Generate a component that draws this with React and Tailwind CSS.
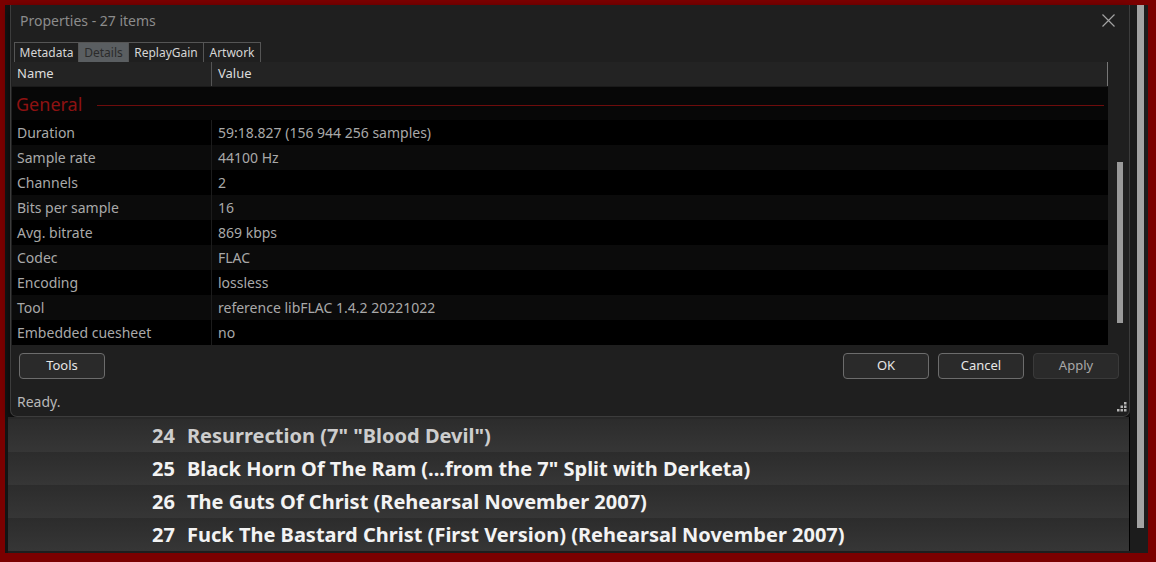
import React from "react";

const ui = { fontFamily: '"Noto Sans", "Open Sans", sans-serif' };

const details = [
  ["Duration", "59:18.827 (156 944 256 samples)"],
  ["Sample rate", "44100 Hz"],
  ["Channels", "2"],
  ["Bits per sample", "16"],
  ["Avg. bitrate", "869 kbps"],
  ["Codec", "FLAC"],
  ["Encoding", "lossless"],
  ["Tool", "reference libFLAC 1.4.2 20221022"],
  ["Embedded cuesheet", "no"],
];

const tracks = [
  ["24", 'Resurrection (7" "Blood Devil")', true],
  ["25", 'Black Horn Of The Ram (...from the 7" Split with Derketa)', false],
  ["26", "The Guts Of Christ (Rehearsal November 2007)", false],
  ["27", "Fuck The Bastard Christ (First Version) (Rehearsal November 2007)", false],
];

function Tab({ label, width, active }) {
  return (
    <div
      className={
        "h-full flex items-center justify-center border-l border-t border-r border-[#555] -ml-px first:ml-0 text-[12px] " +
        (active ? "bg-[#5a5e61] text-[#2b2b2b]" : "text-[#d6d6d6]")
      }
      style={{ width }}
    >
      {label}
    </div>
  );
}

function Button({ children, disabled }) {
  return (
    <div
      className={
        "w-[86px] h-[26px] rounded-[4px] flex items-center justify-center text-[13px] bg-[#2a2a2a] border " +
        (disabled ? "border-[#3a3a3a] text-[#a8a8a8]" : "border-[#6c6c6c] text-[#e6e6e6]")
      }
    >
      {children}
    </div>
  );
}

function ResizeGrip() {
  return (
    <svg width="11" height="11" viewBox="0 0 11 11" className="block">
      <rect x="8" y="0" width="2.5" height="2.5" fill="#b4b4b4" />
      <rect x="4.5" y="3.5" width="2.5" height="2.5" fill="#b4b4b4" />
      <rect x="8" y="3.5" width="2.5" height="2.5" fill="#b4b4b4" />
      <rect x="1" y="7" width="2.5" height="2.5" fill="#b4b4b4" />
      <rect x="4.5" y="7" width="2.5" height="2.5" fill="#b4b4b4" />
      <rect x="8" y="7" width="2.5" height="2.5" fill="#b4b4b4" />
    </svg>
  );
}

function PropertiesDialog() {
  return (
    <div
      className="ml-[2px] h-[412px] w-[1120px] bg-[#1f1f1f] border-l border-r border-b border-[#3c3c3c] rounded-b-[7px] flex flex-col shadow-[0_4px_10px_rgba(0,0,0,0.6)]"
      style={ui}
    >
      {/* title bar */}
      <div className="h-[36px] flex items-center justify-between pl-[9px] pr-[14px] pb-[6px]">
        <span className="text-[14px] text-[#8c8c8c]">Properties - 27 items</span>
        <svg width="13" height="13" viewBox="0 0 13 13" className="block">
          <path d="M0.5 0.5 L12.5 12.5 M12.5 0.5 L0.5 12.5" stroke="#a2a2a2" strokeWidth="1.2" />
        </svg>
      </div>

      {/* tabs */}
      <div className="mt-px h-[20px] pl-[3px] flex">
        <Tab label="Metadata" width={65} />
        <Tab label="Details" width={51} active />
        <Tab label="ReplayGain" width={76} />
        <Tab label="Artwork" width={58} />
      </div>

      {/* list view */}
      <div className="ml-px mr-px h-[283px] flex bg-[#222]">
        <div className="w-[1096px] flex flex-col">
          <div className="h-[25px] flex items-center text-[13px] text-[#dcdcdc] bg-[#232323] border-b border-[#1a1a1a]">
            <div className="w-[200px] h-full flex items-center pl-[5px] border-r border-[#555]">Name</div>
            <div className="flex-1 h-full flex items-center pl-[6px] border-r border-[#777]">Value</div>
          </div>
          <div className="flex-1 bg-black flex flex-col">
            <div className="h-[33px] flex items-center pl-[4px] pr-[4px] bg-[#070707] pt-[3px]">
              <span className="text-[18px] text-[#8e1212] pb-[2px]">General</span>
              <div className="flex-1 ml-[15px] h-px bg-[#6e0c0c]" />
            </div>
            {details.map(([k, v], i) => (
              <div
                key={k}
                className={"h-[25px] flex items-center text-[14px] text-[#a9a9a9] " + (i % 2 ? "bg-[#0b0b0b]" : "bg-black")}
              >
                <div className="w-[200px] h-full flex items-center pl-[5px] border-r border-[#1c1c1c]">{k}</div>
                <div className="flex-1 pl-[6px]">{v}</div>
              </div>
            ))}
          </div>
        </div>
        {/* list scrollbar */}
        <div className="flex-1 bg-[#1f1f1f] flex justify-end pr-[5px] pt-[100px]">
          <div className="w-[6px] h-[161px] bg-[#9a9a9a]" />
        </div>
      </div>

      {/* buttons */}
      <div className="h-[43px] pt-[8px] pl-[8px] pr-[10px] flex items-start">
        <Button>Tools</Button>
        <div className="flex-1" />
        <div className="flex gap-[9px]">
          <Button>OK</Button>
          <Button>Cancel</Button>
          <Button disabled>Apply</Button>
        </div>
      </div>

      {/* status bar */}
      <div className="flex-1 flex items-center justify-between pl-[6px] pr-[2px]">
        <span className="text-[14px] text-[#b8b8b8] pb-[1px]">Ready.</span>
        <div className="self-end mb-[3px]">
          <ResizeGrip />
        </div>
      </div>
    </div>
  );
}

export default function App() {
  return (
    <div className="w-[1156px] h-[562px] bg-[#7b0000] pt-[5px] pl-[5px] pr-[8px] pb-[9px] overflow-hidden">
      <div className="w-full h-full bg-[#141414] flex">
        {/* playlist column */}
        <div className="w-[1125px] h-full flex flex-col pl-[3px]">
          <PropertiesDialog />
          <div className="flex-1 flex flex-col border-r border-black bg-[#282828] overflow-hidden">
            <div className="h-[2px]" />
            {tracks.map(([n, t, dim]) => (
              <div
                key={n}
                className={
                  "h-[33px] shrink-0 flex items-center bg-gradient-to-b from-[#2c2c2c] to-[#363636] font-bold text-[20px] " +
                  (dim ? "text-[#cdcdcd]" : "text-[#f3f3f3]")
                }
                style={ui}
              >
                <span className="ml-[144px] w-[35px]">{n}</span>
                <span>{t}</span>
              </div>
            ))}
          </div>
          <div className="h-[2px] bg-[#1e1e1e]" />
        </div>
        {/* playlist scrollbar */}
        <div className="flex-1 bg-[#1c1c1c] pl-[7px]">
          <div className="w-[7px] h-[523px] bg-[#a3a3a3]" />
        </div>
      </div>
    </div>
  );
}
